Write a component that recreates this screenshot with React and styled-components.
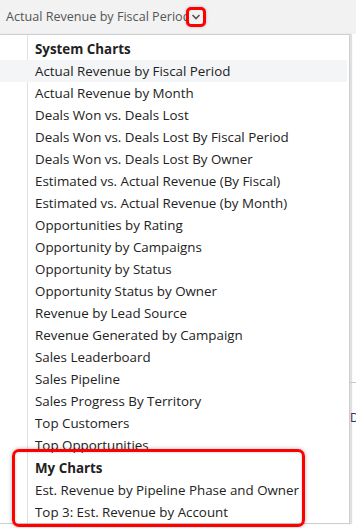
import React from 'react'
import styled, { createGlobalStyle } from 'styled-components'

const GlobalStyle = createGlobalStyle`
    html, body {
        margin: 0;
        padding: 0;
        background: #ffffff;
        overflow: hidden;
    }
    body {
        font-family: 'Open Sans', 'Noto Sans', 'Liberation Sans', sans-serif;
    }
`

const systemCharts = [
    'Actual Revenue by Fiscal Period',
    'Actual Revenue by Month',
    'Deals Won vs. Deals Lost',
    'Deals Won vs. Deals Lost By Fiscal Period',
    'Deals Won vs. Deals Lost By Owner',
    'Estimated vs. Actual Revenue (By Fiscal)',
    'Estimated vs. Actual Revenue (by Month)',
    'Opportunities by Rating',
    'Opportunity by Campaigns',
    'Opportunity by Status',
    'Opportunity Status by Owner',
    'Revenue by Lead Source',
    'Revenue Generated by Campaign',
    'Sales Leaderboard',
    'Sales Pipeline',
    'Sales Progress By Territory',
    'Top Customers',
    'Top Opportunities',
]

const myCharts = ['Est. Revenue by Pipeline Phase and Owner', 'Top 3: Est. Revenue by Account']

const App = () => {
    return (
        <>
            <GlobalStyle />
            <Page>
                <Bar>
                    <BarTitle>Actual Revenue by Fiscal Period</BarTitle>
                    <ChevronButton>
                        <svg width='10' height='8' viewBox='0 0 10 8'>
                            <path d='M1.5 2 L5 5.5 L8.5 2' fill='none' stroke='#555' strokeWidth='1.6' />
                        </svg>
                    </ChevronButton>
                </Bar>
                <Body>
                    <Panel>
                        <List>
                            <Row bold>System Charts</Row>
                            {systemCharts.map((name, i) => (
                                <Row key={name} selected={i === 0}>
                                    {name}
                                </Row>
                            ))}
                            <Marked>
                                <Row bold>My Charts</Row>
                                {myCharts.map((name) => (
                                    <Row key={name}>{name}</Row>
                                ))}
                            </Marked>
                        </List>
                    </Panel>
                    <Behind>
                        <Rule />
                        <Peek>D</Peek>
                    </Behind>
                </Body>
            </Page>
        </>
    )
}

export default App

const Page = styled.div`
    width: 356px;
    height: 528px;
    overflow: hidden;
    display: flex;
    flex-direction: column;
`

const Bar = styled.div`
    height: 34px;
    flex-shrink: 0;
    background: #f2f2f2;
    display: flex;
    align-items: center;
    padding-left: 6px;
`

const BarTitle = styled.span`
    font-size: 12.6px;
    color: #555555;
    white-space: nowrap;
    margin-top: -1px;
`

const ChevronButton = styled.div`
    width: 14px;
    height: 14px;
    margin-left: -4px;
    margin-top: 0;
    border: 3px solid #ff0000;
    border-radius: 5px;
    display: flex;
    align-items: center;
    justify-content: center;
    background: #f2f2f2;
    box-shadow: 0 0 3px rgba(0, 0, 0, 0.25);

    svg {
        display: block;
    }
`

const Body = styled.div`
    display: flex;
    align-items: flex-start;
`

const Panel = styled.div`
    width: 349px;
    margin-left: -1px;
    flex-shrink: 0;
    background: #ffffff;
    border: 1px solid #cfcfcf;
    box-shadow: 2px 0 1px rgba(0, 0, 0, 0.12);
`

const List = styled.div`
    padding: 3px 2px 0 0;
    background: linear-gradient(
        to right,
        transparent 27px,
        #e2e2e2 27px,
        #e2e2e2 28px,
        transparent 28px
    );
`

const Row = styled.div`
    height: 22px;
    line-height: 22px;
    padding-left: 35px;
    font-size: 13.35px;
    font-weight: ${(props) => (props.bold ? 700 : 400)};
    color: #222222;
    white-space: nowrap;
    background: ${(props) => (props.selected ? '#f4f5f7' : 'transparent')};
`

const Marked = styled.div`
    position: relative;
    margin-top: 1px;

    &::after {
        content: '';
        position: absolute;
        left: 12px;
        top: -8px;
        width: 287px;
        height: 72px;
        border: 3px solid #ff0000;
        border-radius: 7px;
        box-shadow: 0 0 4px rgba(0, 0, 0, 0.3), inset 0 0 3px rgba(0, 0, 0, 0.2);
        pointer-events: none;
    }
`

const Behind = styled.div`
    flex: 1;
    display: flex;
    flex-direction: column;
    padding-top: 348px;
`

const Rule = styled.div`
    height: 1px;
    background: #c8c8c8;
`

const Peek = styled.div`
    margin-top: 28px;
    font-size: 12px;
    color: #3a2a6a;
    line-height: 14px;
`
